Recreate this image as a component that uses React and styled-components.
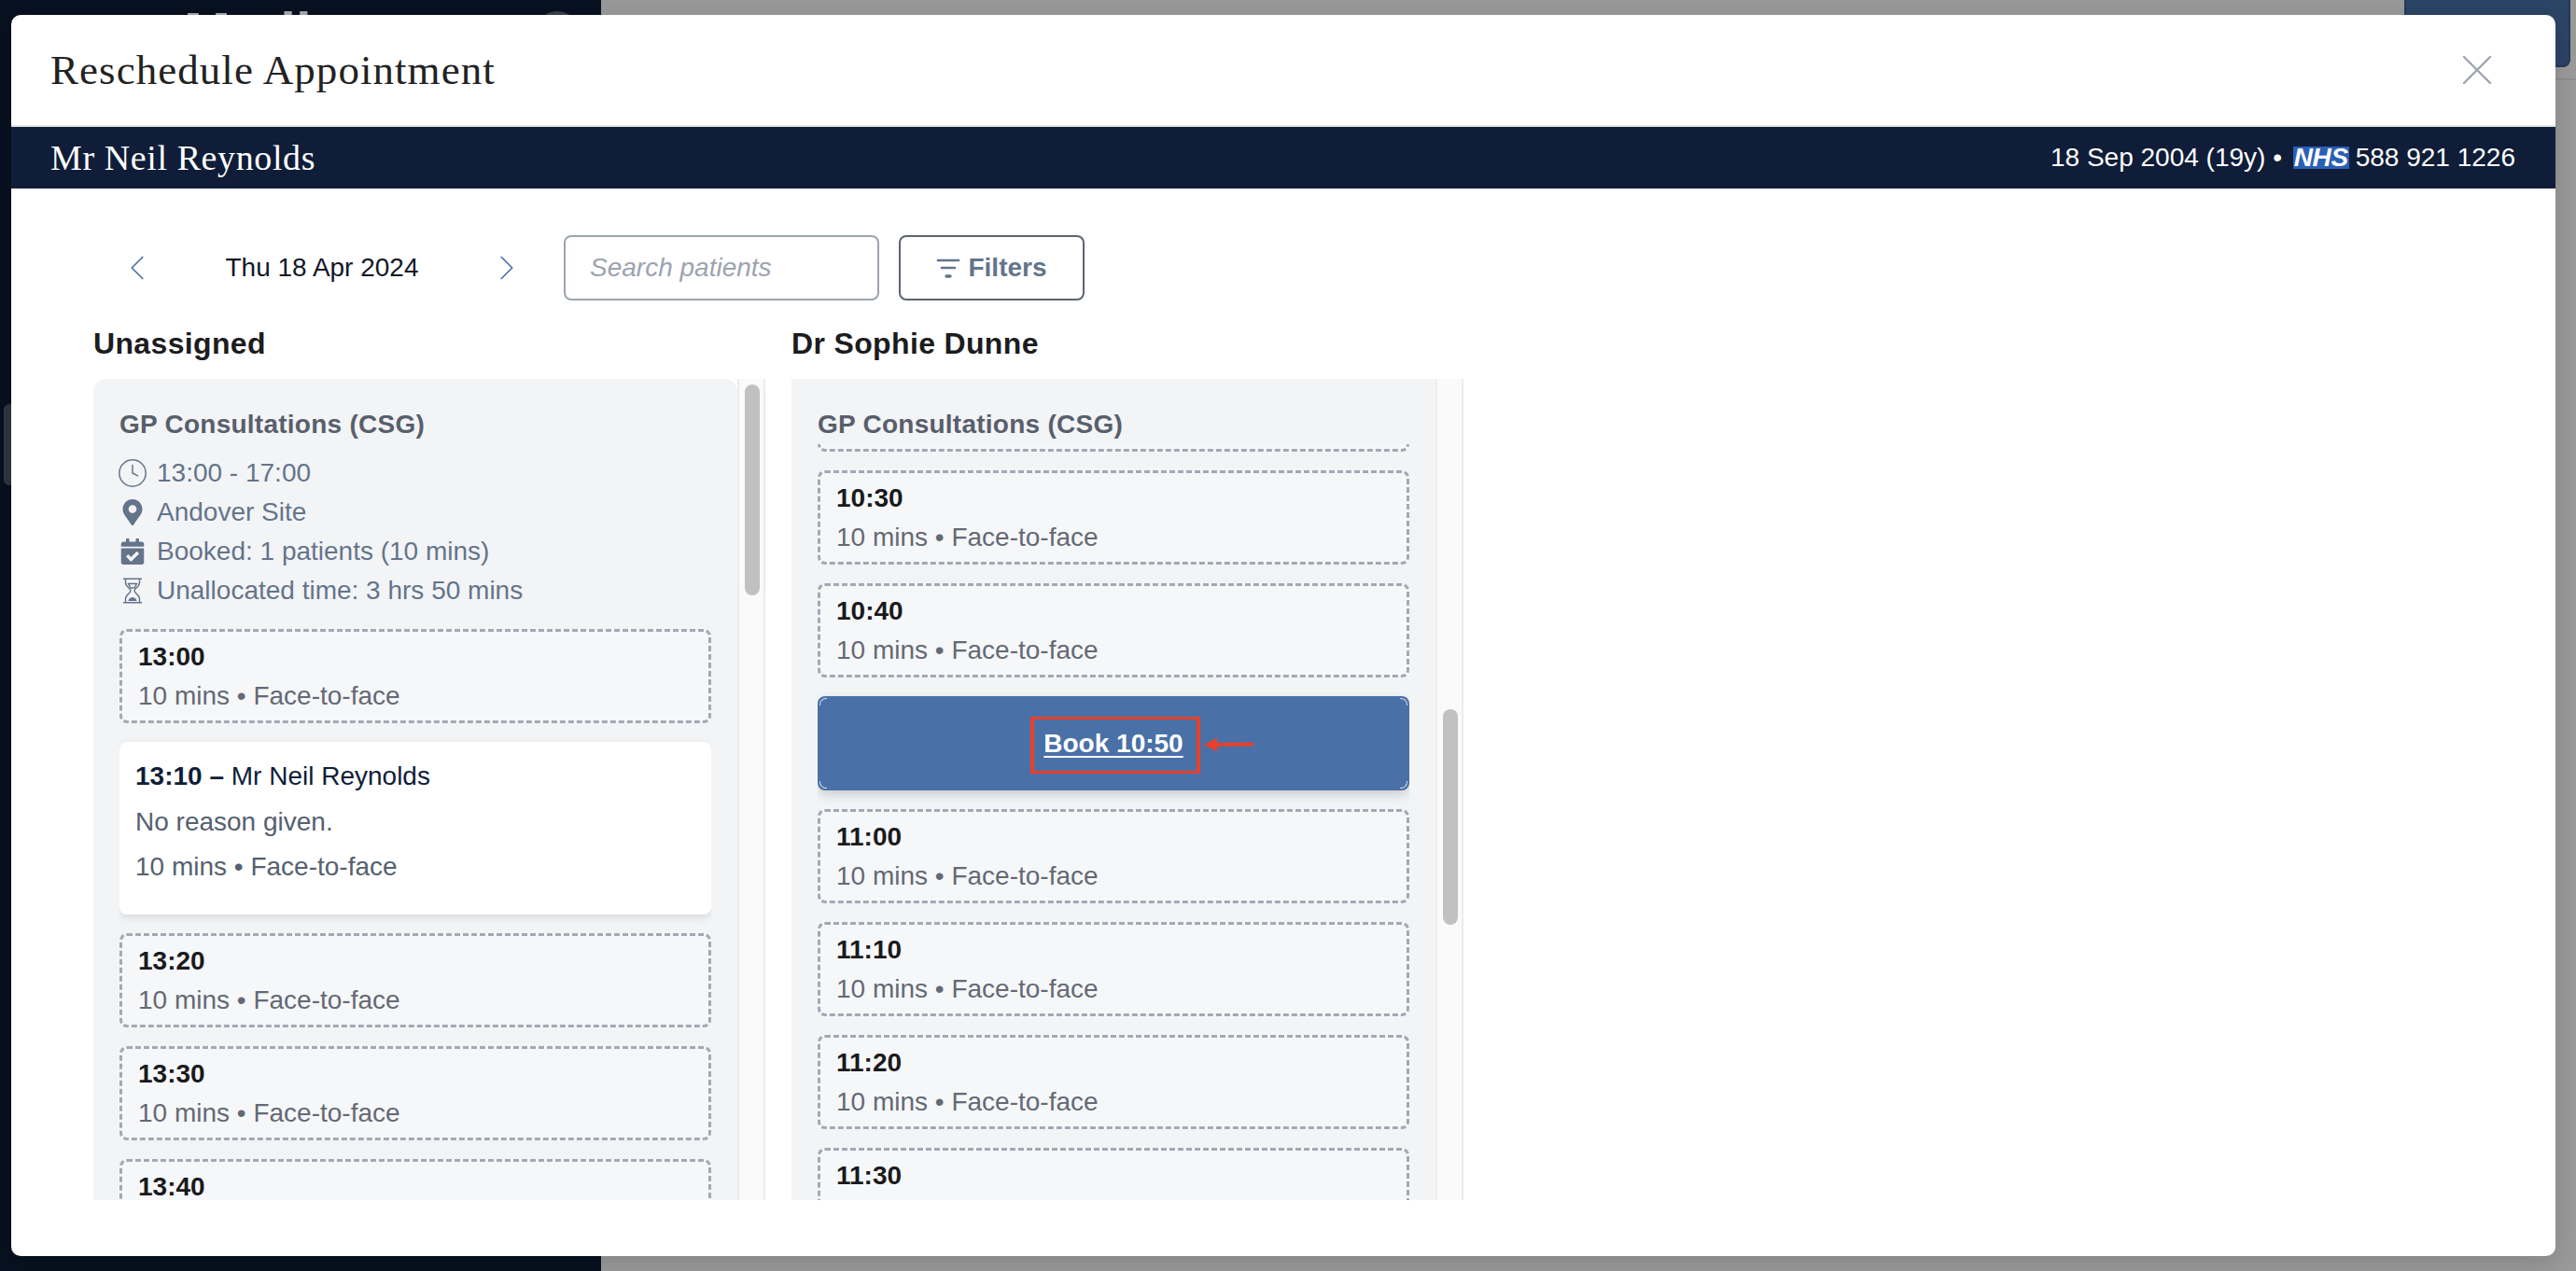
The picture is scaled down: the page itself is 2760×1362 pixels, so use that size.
import React from "react";
import styled, { createGlobalStyle } from "styled-components";
import { ChevronLeft, ChevronRight, Clock, X } from "lucide-react";
import { FaCalendarCheck, FaMapMarkerAlt } from "react-icons/fa";

const GlobalStyle = createGlobalStyle`
  html, body {
    margin: 0;
    padding: 0;
    background: #999999;
    font-family: "Liberation Sans", Arial, sans-serif;
  }
  * {
    box-sizing: border-box;
  }
`;

const Page = styled.div`
  position: relative;
  display: flex;
  width: 2760px;
  height: 1362px;
  overflow: hidden;
`;

const Sidebar = styled.div`
  display: flex;
  justify-content: space-between;
  width: 644px;
  height: 100%;
  padding: 0 23px 0 197px;
  background: #07111f;
`;

const Logo = styled.div`
  margin-top: 5px;
  color: #a6a9ae;
  font-size: 60px;
  font-weight: 700;
  line-height: 1;
`;

const Avatar = styled.div`
  width: 48px;
  height: 48px;
  margin-top: 12px;
  border-radius: 50%;
  background: #3a414d;
`;

const SideHandle = styled.div`
  position: absolute;
  left: 4px;
  top: 433px;
  width: 12px;
  height: 87px;
  border-radius: 8px;
  background: #2f3642;
`;

const Main = styled.div`
  flex: 1;
  display: flex;
  justify-content: flex-end;
  align-items: flex-start;
  height: 86px;
  padding-right: 6px;
  border-bottom: 2px solid #8c8c8c;
`;

const TopButton = styled.div`
  width: 178px;
  height: 72px;
  border: 2px solid #24395a;
  border-top: 0;
  border-radius: 0 0 8px 8px;
  background: #2c4466;
`;

const Modal = styled.div`
  position: absolute;
  left: 12px;
  top: 16px;
  display: flex;
  flex-direction: column;
  width: 2726px;
  height: 1330px;
  border-radius: 10px;
  background: #ffffff;
  box-shadow: 0 6px 24px rgba(0, 0, 0, 0.14);
  overflow: hidden;
`;

const ModalHeader = styled.div`
  display: flex;
  justify-content: space-between;
  align-items: center;
  height: 120px;
  padding: 0 56px 0 42px;
  border-bottom: 2px solid #e3e4e6;
`;

const Title = styled.h1`
  margin: 0;
  color: #222222;
  font-family: "Liberation Serif", Georgia, serif;
  font-size: 45px;
  font-weight: 400;
  letter-spacing: 1.05px;
`;

const CloseButton = styled.div`
  display: flex;
  justify-content: center;
  align-items: center;
  width: 56px;
  height: 56px;
  color: #9ca3af;
`;

const PatientBar = styled.div`
  display: flex;
  justify-content: space-between;
  align-items: center;
  height: 66px;
  padding: 0 43px 0 42px;
  background: #0f1d38;
  color: #ffffff;
`;

const PatientName = styled.div`
  font-family: "Liberation Serif", Georgia, serif;
  font-size: 38px;
  letter-spacing: 0.6px;
`;

const PatientMeta = styled.div`
  display: flex;
  align-items: center;
  font-size: 28px;
  white-space: pre;
`;

const NhsBadge = styled.span`
  display: inline-block;
  width: 60px;
  height: 24px;
  margin: 0 7px 0 4px;
  background: #2a5fb5;
  color: #ffffff;
  font-size: 28px;
  font-style: italic;
  font-weight: 700;
  letter-spacing: -0.4px;
  line-height: 24px;
  text-align: center;
`;

const Body = styled.div`
  flex: 1;
  padding: 50px 0 0 88px;
`;

const Toolbar = styled.div`
  display: flex;
  align-items: center;
  height: 70px;
`;

const DateNav = styled.div`
  display: flex;
  justify-content: space-between;
  align-items: center;
  width: 490px;
  margin-right: 14px;
  color: #111827;
  font-size: 28px;
`;

const NavButton = styled.div`
  display: flex;
  justify-content: center;
  width: 93px;
  color: #4a70a8;
`;

const SearchInput = styled.div`
  display: flex;
  align-items: center;
  width: 338px;
  height: 70px;
  padding-left: 26px;
  border: 2px solid #9ca3af;
  border-radius: 8px;
  color: #9ca3af;
  font-size: 28px;
  font-style: italic;
`;

const FilterButton = styled.div`
  display: flex;
  justify-content: center;
  align-items: center;
  gap: 8px;
  width: 199px;
  height: 70px;
  margin-left: 21px;
  border: 2px solid #5b6472;
  border-radius: 8px;
  color: #64748b;
  font-size: 28px;
  font-weight: 700;
`;

const Columns = styled.div`
  display: flex;
  gap: 28px;
  margin-top: 24px;
`;

const Column = styled.div`
  display: flex;
  flex-direction: column;
  width: 720px;
`;

const ColumnTitle = styled.h2`
  margin: 0 0 16px;
  color: #1c1c1e;
  font-size: 32px;
  font-weight: 700;
  letter-spacing: 0.35px;
  line-height: 44px;
`;

const ColumnBody = styled.div`
  display: flex;
  height: 880px;
`;

const Panel = styled.div`
  flex: 1;
  display: flex;
  flex-direction: column;
  min-width: 0;
  padding: 28px 28px 0;
  border-radius: ${(p) => (p.$rounded ? "14px 14px 0 0" : "0")};
  background: #f3f4f6;
  overflow: hidden;
`;

const PanelTitle = styled.div`
  color: #585f6c;
  font-size: 28px;
  font-weight: 700;
  letter-spacing: 0.25px;
  line-height: 42px;
`;

const InfoList = styled.div`
  display: flex;
  flex-direction: column;
  margin-top: 10px;
  margin-bottom: 20px;
`;

const InfoRow = styled.div`
  display: flex;
  align-items: center;
  gap: 12px;
  height: 42px;
  color: #64748b;
  font-size: 28px;
`;

const InfoIcon = styled.span`
  display: flex;
  justify-content: center;
  align-items: center;
  width: 28px;
  height: 28px;

  svg {
    flex: none;
  }
`;

const Slots = styled.div`
  flex: 1;
  display: flex;
  flex-direction: column;
  gap: 20px;
  min-height: 0;
  overflow: hidden;
`;

const Slot = styled.div`
  flex: none;
  height: 101px;
  margin-top: ${(p) => (p.$clipped ? "-93px" : "0")};
  padding: 6px 17px 0;
  border: 3px dashed #a4a8b4;
  border-radius: 8px;
  background: #f6f7f9;
`;

const SlotTime = styled.div`
  color: #1a1a1c;
  font-size: 28px;
  font-weight: 700;
  line-height: 42px;
`;

const SlotInfo = styled.div`
  color: #646974;
  font-size: 28px;
  line-height: 42px;
`;

const BookedCard = styled.div`
  flex: none;
  height: 185px;
  padding: 16px 17px 0;
  border-radius: 8px;
  background: #ffffff;
  box-shadow: 0 3px 10px rgba(0, 0, 0, 0.12);
`;

const CardTitle = styled.div`
  color: #0f1d38;
  font-size: 28px;
  line-height: 42px;
`;

const CardLine = styled.div`
  margin-top: 6.5px;
  color: #566070;
  font-size: 28px;
  line-height: 42px;
`;

const BookSlot = styled.div`
  position: relative;
  flex: none;
  display: flex;
  justify-content: center;
  align-items: center;
  height: 101px;
  border-radius: 8px;
  background: #4a70a8;
  box-shadow: 0 5px 12px rgba(0, 0, 0, 0.16);
  color: #ffffff;
  font-size: 28px;
  font-weight: 700;
  text-decoration: underline;
  text-underline-offset: 4px;
`;

const SlotCorner = styled.span`
  position: absolute;
  width: 8px;
  height: 8px;
  border: 0 solid rgba(255, 255, 255, 0.75);
  ${(p) => (p.$v === "top" ? "top: 2px; border-top-width: 1px;" : "bottom: 2px; border-bottom-width: 1px;")}
  ${(p) => (p.$h === "left" ? "left: 2px; border-left-width: 1px;" : "right: 2px; border-right-width: 1px;")}
  border-${(p) => p.$v}-${(p) => p.$h}-radius: 7px;
`;

const RedBox = styled.div`
  position: absolute;
  left: 228px;
  top: 22px;
  width: 182px;
  height: 61px;
  border: solid #e8402a;
  border-width: 3px 4px;
`;

const RedArrow = styled.svg`
  position: absolute;
  left: 414px;
  top: 42px;
  width: 54px;
  height: 20px;
`;

const Rail = styled.div`
  flex: none;
  display: flex;
  justify-content: center;
  width: 30px;
  padding-left: 2px;
  border-left: 2px solid #ececec;
  border-right: 2px solid #ececec;
  background: #fafafa;
`;

const RailThumb = styled.div`
  width: 16px;
  height: ${(p) => p.$height}px;
  margin-top: ${(p) => p.$top}px;
  border-radius: 8px;
  background: #c1c1c1;
`;

const slotInfo = "10 mins • Face-to-face";

const OpenSlot = ({ time, clipped }) => (
  <Slot $clipped={clipped}>
    <SlotTime>{time}</SlotTime>
    <SlotInfo>{slotInfo}</SlotInfo>
  </Slot>
);

const FilterIcon = () => (
  <svg width="26" height="24" viewBox="0 0 26 24" fill="none" stroke="currentColor" strokeWidth="2.6" strokeLinecap="round">
    <path d="M2 4h22" />
    <path d="M6 12h14" />
    <path d="M11 21h4" strokeWidth="3.4" />
  </svg>
);

const HourglassIcon = () => (
  <svg width="22" height="28" viewBox="0 0 22 28" fill="none" stroke="currentColor" strokeWidth="1.4">
    <path d="M1 1.2h20M1 26.8h20" />
    <path d="M3.5 1.5v4c0 4 5.5 6 5.5 8.5s-5.5 4.5-5.5 8.5v4" />
    <path d="M18.5 1.5v4c0 4-5.5 6-5.5 8.5s5.500 4.500 5.500 8.500v4" />
    <path d="M6.500 6.500h9l-2.500 4.500h-4z" />
    <path d="M6.500 25c0-2.500 2.500-3.500 4.500-4 2 .5 4.500 1.500 4.500 4z" fill="currentColor" stroke="none" />
  </svg>
);

const App = () => {
  return (
    <>
      <GlobalStyle />
      <Page>
        <Sidebar>
          <Logo>Medi</Logo>
          <Avatar />
        </Sidebar>
        <SideHandle />
        <Main>
          <TopButton />
        </Main>
        <Modal>
          <ModalHeader>
            <Title>Reschedule Appointment</Title>
            <CloseButton>
              <X size={56} strokeWidth={1} />
            </CloseButton>
          </ModalHeader>
          <PatientBar>
            <PatientName>Mr Neil Reynolds</PatientName>
            <PatientMeta>
              {"18 Sep 2004 (19y) • "}
              <NhsBadge>NHS</NhsBadge>
              588 921 1226
            </PatientMeta>
          </PatientBar>
          <Body>
            <Toolbar>
              <DateNav>
                <NavButton>
                  <ChevronLeft size={46} strokeWidth={0.9} />
                </NavButton>
                Thu 18 Apr 2024
                <NavButton>
                  <ChevronRight size={46} strokeWidth={0.9} />
                </NavButton>
              </DateNav>
              <SearchInput>Search patients</SearchInput>
              <FilterButton>
                <FilterIcon />
                Filters
              </FilterButton>
            </Toolbar>
            <Columns>
              <Column>
                <ColumnTitle>Unassigned</ColumnTitle>
                <ColumnBody>
                  <Panel $rounded>
                    <PanelTitle>GP Consultations (CSG)</PanelTitle>
                    <InfoList>
                      <InfoRow>
                        <InfoIcon>
                          <Clock size={34} strokeWidth={1.05} />
                        </InfoIcon>
                        13:00 - 17:00
                      </InfoRow>
                      <InfoRow>
                        <InfoIcon>
                          <FaMapMarkerAlt size={28} />
                        </InfoIcon>
                        Andover Site
                      </InfoRow>
                      <InfoRow>
                        <InfoIcon>
                          <FaCalendarCheck size={28} />
                        </InfoIcon>
                        Booked: 1 patients (10 mins)
                      </InfoRow>
                      <InfoRow>
                        <InfoIcon>
                          <HourglassIcon />
                        </InfoIcon>
                        Unallocated time: 3 hrs 50 mins
                      </InfoRow>
                    </InfoList>
                    <Slots>
                      <OpenSlot time="13:00" />
                      <BookedCard>
                        <CardTitle>
                          <strong>13:10 –</strong> Mr Neil Reynolds
                        </CardTitle>
                        <CardLine>No reason given.</CardLine>
                        <CardLine>{slotInfo}</CardLine>
                      </BookedCard>
                      <OpenSlot time="13:20" />
                      <OpenSlot time="13:30" />
                      <OpenSlot time="13:40" />
                    </Slots>
                  </Panel>
                  <Rail>
                    <RailThumb $top={6} $height={226} />
                  </Rail>
                </ColumnBody>
              </Column>
              <Column>
                <ColumnTitle>Dr Sophie Dunne</ColumnTitle>
                <ColumnBody>
                  <Panel>
                    <PanelTitle>GP Consultations (CSG)</PanelTitle>
                    <Slots>
                      <OpenSlot time="10:20" clipped />
                      <OpenSlot time="10:30" />
                      <OpenSlot time="10:40" />
                      <BookSlot>
                        <SlotCorner $v="top" $h="left" />
                        <SlotCorner $v="top" $h="right" />
                        <SlotCorner $v="bottom" $h="left" />
                        <SlotCorner $v="bottom" $h="right" />
                        Book 10:50
                        <RedBox />
                        <RedArrow viewBox="0 0 54 20">
                          <path d="M0 10 L14 2.500 V8 L53 7.600 V11.400 L14 12 V17.500 Z" fill="#e8402a" />
                        </RedArrow>
                      </BookSlot>
                      <OpenSlot time="11:00" />
                      <OpenSlot time="11:10" />
                      <OpenSlot time="11:20" />
                      <OpenSlot time="11:30" />
                    </Slots>
                  </Panel>
                  <Rail>
                    <RailThumb $top={354} $height={231} />
                  </Rail>
                </ColumnBody>
              </Column>
            </Columns>
          </Body>
        </Modal>
      </Page>
    </>
  );
};

export default App;
